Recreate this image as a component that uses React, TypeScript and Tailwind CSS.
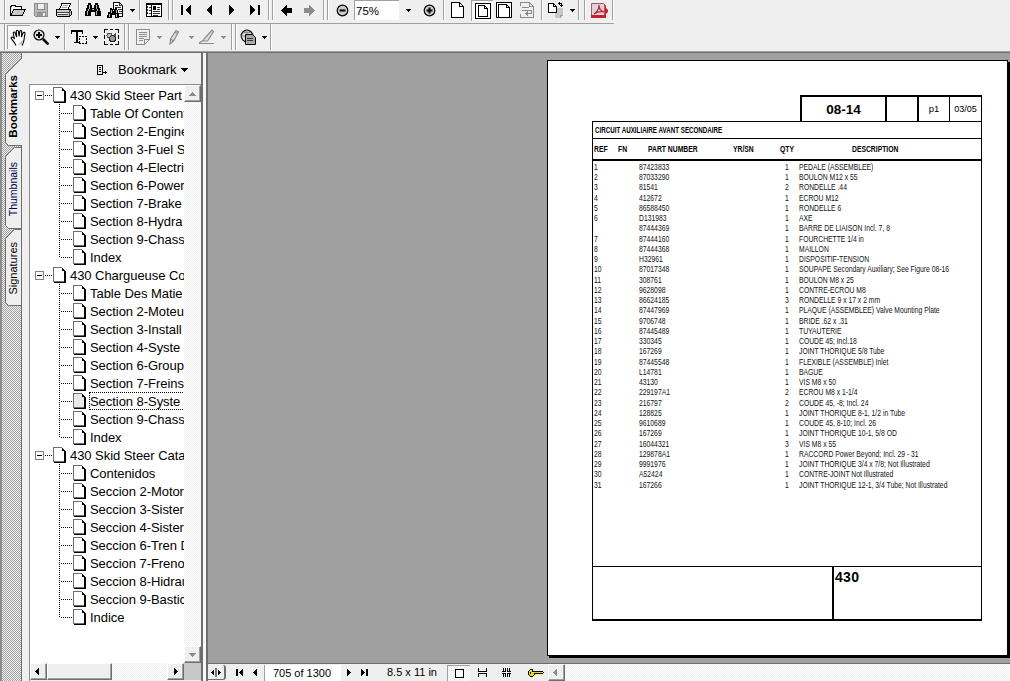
import React from 'react';
import clsx from 'clsx';

const bookmarks = [
  {
    title: '430 Skid Steer Part',
    items: [
      'Table Of Content',
      'Section 2-Engine',
      'Section 3-Fuel S',
      'Section 4-Electri',
      'Section 6-Power',
      'Section 7-Brake',
      'Section 8-Hydra',
      'Section 9-Chass',
      'Index',
    ],
  },
  {
    title: '430 Chargueuse Co',
    items: [
      'Table Des Matie',
      'Section 2-Moteu',
      'Section 3-Install',
      'Section 4-Syste',
      'Section 6-Group',
      'Section 7-Freins',
      'Section 8-Syste',
      'Section 9-Chass',
      'Index',
    ],
    selected: 6,
  },
  {
    title: '430 Skid Steer Cata',
    items: [
      'Contenidos',
      'Seccion 2-Motor',
      'Seccion 3-Sister',
      'Seccion 4-Sister',
      'Seccion 6-Tren D',
      'Seccion 7-Freno',
      'Seccion 8-Hidrau',
      'Seccion 9-Bastic',
      'Indice',
    ],
  },
];

// ref, part number, qty, description
const parts = [
  ['1', '87423833', '1', 'PEDALE (ASSEMBLEE)'],
  ['2', '87033290', '1', 'BOULON M12 x 55'],
  ['3', '81541', '2', 'RONDELLE .44'],
  ['4', '412672', '1', 'ECROU M12'],
  ['5', '86588450', '1', 'RONDELLE 6'],
  ['6', 'D131983', '1', 'AXE'],
  ['', '87444369', '1', 'BARRE DE LIAISON Incl. 7, 8'],
  ['7', '87444160', '1', 'FOURCHETTE 1/4 in'],
  ['8', '87444368', '1', 'MAILLON'],
  ['9', 'H32961', '1', 'DISPOSITIF-TENSION'],
  ['10', '87017348', '1', 'SOUPAPE Secondary Auxiliary; See Figure 08-16'],
  ['11', '308761', '1', 'BOULON M8 x 25'],
  ['12', '9628098', '1', 'CONTRE-ECROU M8'],
  ['13', '86624185', '3', 'RONDELLE 9 x 17 x 2 mm'],
  ['14', '87447969', '1', 'PLAQUE (ASSEMBLEE) Valve Mounting Plate'],
  ['15', '9706748', '1', 'BRIDE .62 x .31'],
  ['16', '87445489', '1', 'TUYAUTERIE'],
  ['17', '330345', '1', 'COUDE 45; Incl.18'],
  ['18', '167269', '1', 'JOINT THORIQUE 5/8 Tube'],
  ['19', '87445548', '1', 'FLEXIBLE (ASSEMBLE) Inlet'],
  ['20', 'L14781', '1', 'BAGUE'],
  ['21', '43130', '1', 'VIS M8 x 50'],
  ['22', '229197A1', '2', 'ECROU M8 x 1-1/4'],
  ['23', '216797', '2', 'COUDE 45, -8; Incl. 24'],
  ['24', '128825', '1', 'JOINT THORIQUE 8-1, 1/2 in Tube'],
  ['25', '9610689', '1', 'COUDE 45, 8-10; Incl. 26'],
  ['26', '167269', '1', 'JOINT THORIQUE 10-1, 5/8 OD'],
  ['27', '16044321', '3', 'VIS M8 x 55'],
  ['28', '129878A1', '1', 'RACCORD Power Beyond; Incl. 29 - 31'],
  ['29', '9991976', '1', 'JOINT THORIQUE 3/4 x 7/8; Not Illustrated'],
  ['30', 'A52424', '1', 'CONTRE-JOINT Not Illustrated'],
  ['31', '167266', '1', 'JOINT THORIQUE 12-1, 3/4 Tube; Not Illustrated'],
];

type IconProps = {
  w: number;
  h?: number;
  className?: string;
  smooth?: boolean;
  children: React.ReactNode;
};

const Icon = ({ w, h = 16, className, smooth, children }: IconProps) => (
  <svg
    width={w}
    height={h}
    viewBox={`0 0 ${w} ${h}`}
    fill="none"
    stroke="#000"
    shapeRendering={smooth ? 'auto' : 'crispEdges'}
    className={clsx('shrink-0', className)}
  >
    {children}
  </svg>
);

const Tri = ({ d, w, h, className, gray }: { d: string; w: number; h: number; className?: string; gray?: boolean }) => (
  <Icon w={w} h={h} className={className}>
    <path d={d} fill={gray ? '#8c8c8c' : '#000'} stroke="none" />
  </Icon>
);

const Drop = ({ className, gray }: { className?: string; gray?: boolean }) => (
  <Tri d="M0 0h5v1h-1v1h-1v1h-1v-1h-1v-1h-1z" w={5} h={3} className={className} gray={gray} />
);

const Sep = ({ className }: { className?: string }) => (
  <div className={clsx('w-[2px] shrink-0 self-stretch border-r border-white bg-[#a0a0a0]', className)} />
);

const FIRST = 'M0 0h2v10h-2zM9 0h1v10h-1v-1h-1v-1h-1v-1h-1v-1h-1v-2h1v-1h1v-1h1v-1h1z';
const LAST = 'M8 0h2v10h-2zM1 0h-1v10h1v-1h1v-1h1v-1h1v-1h1v-2h-1v-1h-1v-1h-1v-1h-1z';
const PREV = 'M6 0v10h-1v-1h-1v-1h-1v-1h-1v-1h-1v-2h1v-1h1v-1h1v-1h1v-1z';
const NEXT = 'M0 0v10h1v-1h1v-1h1v-1h1v-1h1v-2h-1v-1h-1v-1h-1v-1h-1v-1z';

const Page = ({ x = 0, y = 0, w = 13, h = 16 }) => (
  <path
    d={`M${x + 0.5} ${y + 0.5}h${w - 5}l4 4v${h - 5}h-${w - 1}zM${x + w - 4.5} ${y + 0.5}v4h4`}
    fill="#fff"
  />
);

const Binoculars = () => (
  <>
    <path
      d="M3 1h3v2h1v3h2v-3h1v-2h3v2h1v3h1v3h1v5h-6v-4h-4v4h-6v-5h1v-3h1v-3h1z"
      fill="#000"
      stroke="none"
    />
    <path d="M4.500 3v4M3.500 7v2M2.500 9v4M11.500 3v4M12.500 7v2M11.500 9v4M7 7.500h2" stroke="#b4b4b4" />
  </>
);

const TopBar = () => (
  <div className="flex h-[24px] w-[614px] items-center border-b border-[#a0a0a0] pb-[3px]">
    <Sep className="ml-[4px]" />
    {/* open */}
    <Icon w={17} className="ml-[3px]">
      <path d="M1.500 14v-10h1v-1h4v1h6v3" fill="#fff" />
      <path d="M1.500 13.500L5 7.500h11.500L13 13.500z" fill="#c8c8c8" />
    </Icon>
    {/* save */}
    <Icon w={15} className="ml-[8px]">
      <path d="M.5 1.500h13v13h-12l-1-1z" fill="#b8b8b8" stroke="#8c8c8c" />
      <path d="M3.500 1.500h7v6h-7z" fill="#eee" stroke="#8c8c8c" />
      <path d="M3.500 10.500h8v4h-8z" fill="#999" stroke="#8c8c8c" />
      <path d="M9 11h2v3h-2z" fill="#eee" stroke="none" />
    </Icon>
    {/* print */}
    <Icon w={16} className="ml-[7px]">
      <path d="M3.500 7.500L6 1.500h8.500L12 7.500z" fill="#fff" />
      <path d="M7 3.500h5M6 5.500h5" stroke="#999" />
      <path d="M1 7.500h13l1.500 2v3l-2 2h-12l-1-1v-4z" fill="#ccc" />
      <path d="M1 10.500h12M2 12.500h10M13.500 8v6" stroke="#444" />
      <path d="M2 11.500h9" stroke="#fff" />
    </Icon>
    <Sep className="ml-[6px]" />
    <Icon w={16} className="ml-[5px]">
      <Binoculars />
    </Icon>
    {/* search */}
    <Icon w={17} className="ml-[6px]">
      <path d="M6.500 8v-7.500h6l3 3v11h-4" fill="#fff" />
      <path d="M12.500 .5v3h3M8 3.500h3M8 5.500h6M11 7.500h4M12 9.500h3M12 11.500h3" stroke="#333" />
      <path d="M3 6h2v1h1v2h1v-2h1v-1h2v2h1v3h1v5h-4v-3h-3v3h-5v-3h1v-3h2z" fill="#000" stroke="none" />
      <path d="M4.500 8v3M2.500 12v3M9.500 8v3M9.500 12v3" stroke="#b4b4b4" />
    </Icon>
    <Drop className="ml-[6px]" />
    <Sep className="ml-[4px]" />
    {/* navigation pane */}
    <Icon w={16} className="ml-[5px]">
      <path d="M.5 1.500h15v13h-15z" fill="#fff" />
      <path d="M0 2.500h16M5.500 3v12" />
      <path d="M1.500 4v2M1.500 7v2M1.500 10v2M3 5.500h2M3 8.500h2M3 11.500h2M11 5.500h3M11 7.500h3M7 9.500h7M7 11.500h7M7 13.500h5" stroke="#333" />
      <path d="M7 4h3v4h-3z" fill="#000" stroke="none" />
    </Icon>
    <Sep className="ml-[6px]" />
    <Sep className="ml-[2px]" />
    <Tri d={FIRST} w={10} h={10} className="ml-[7px]" />
    <Tri d={PREV} w={6} h={10} className="ml-[15px]" />
    <Tri d={NEXT} w={6} h={10} className="ml-[17px]" />
    <Tri d={LAST} w={10} h={10} className="ml-[15px]" />
    <Sep className="ml-[8px]" />
    <Sep className="ml-[2px]" />
    <Tri d="M0 5h1v-1h1v-1h1v-1h1v-1h1v-1h1v3h5v5h-5v3h-1v-1h-1v-1h-1v-1h-1v-1h-1v-1h-1z" w={11} h={11} className="ml-[7px]" />
    <Tri gray d="M11 5h-1v-1h-1v-1h-1v-1h-1v-1h-1v-1h-1v3h-5v5h5v3h1v-1h1v-1h1v-1h1v-1h1v-1h1z" w={11} h={11} className="ml-[12px]" />
    <Sep className="ml-[8px]" />
    <Sep className="ml-[2px]" />
    <Icon w={13} h={13} smooth className="ml-[7px]">
      <circle cx="6.500" cy="6.500" r="5.300" fill="#ccc" strokeWidth="1.200" />
      <path d="M3.500 6.500h6" strokeWidth="2" />
    </Icon>
    <div className="ml-[5px] h-[20px] w-[45px] shrink-0 border-t border-l border-[#a0a0a0] bg-white pl-[1px] text-[11.500px] leading-[20px]">
      75%
    </div>
    <Drop className="ml-[7px]" />
    <Icon w={13} h={13} smooth className="ml-[12px]">
      <circle cx="6.500" cy="6.500" r="5.300" fill="#ccc" strokeWidth="1.200" />
      <path d="M3.500 6.500h6M6.500 3.500v6" strokeWidth="2" />
    </Icon>
    <Sep className="ml-[7px]" />
    <Icon w={13} className="ml-[6px]">
      <Page />
    </Icon>
    <div className="ml-[7px] flex h-[21px] w-[22px] shrink-0 items-center justify-center border-t border-l border-[#a0a0a0] bg-[#f8f8f8]">
      <Icon w={16}>
        <path d="M.5 .5h15v15h-15z" fill="#fff" />
        <path d="M3.500 2.500h6l3 3v8h-9zM9.500 2.500v3h3" />
      </Icon>
    </div>
    <Icon w={16} className="ml-[3px]">
      <path d="M.5 .5h15v15h-15z" fill="#fff" />
      <path d="M2.500 15.500v-13h8l3 3v10M10.500 2.500v3h3" />
    </Icon>
    <Icon w={14} className="ml-[8px]">
      <path d="M.5 4v-3.500h9l4 4v11h-13v-4M9.500 .5v4h3" stroke="#8c8c8c" />
      <path d="M2 5.500h7M2 8.500h9.500v3h-7M7.500 9v5M6.500 10v3M5.500 11v1" stroke="#8c8c8c" />
    </Icon>
    <Sep className="ml-[7px]" />
    {/* rotate view */}
    <Icon w={16} className="ml-[5px]">
      <path d="M7 6h8v7l-3 3h-5z" fill="#c8c8c8" stroke="none" />
      <path d="M12 16v-3h3" stroke="#a0a0a0" />
      <path d="M.5 1.500h5l3 3v6h-8zM5.500 1.500v3h3" fill="#fff" />
      <path d="M10 1.500h3M13.500 1v4M12 3.500h3M11.500 0v3" />
    </Icon>
    <Drop className="ml-[6px]" />
    <Sep className="ml-[3px]" />
    <Sep className="ml-[4px]" />
    {/* acrobat */}
    <Icon w={17} smooth className="ml-[5px]">
      <path d="M.5 1.500h12l2 2v12h-14z" fill="#dcd4d8" stroke="#8c6070" />
      <path d="M0 13h15v3h-15z" fill="#c81e32" stroke="none" />
      <path d="M14 3v11M15 7l2 2-2 2z" stroke="#c81e32" strokeWidth="1.500" />
      <path d="M3 12c3-2 5-6 5-9 0 3 1 6 5 7-4-1-7 0-10 2z" stroke="#c81e32" strokeWidth="1.200" />
    </Icon>
    <Sep className="ml-[4px]" />
  </div>
);

const ToolBar = () => (
  <div className="flex h-[27px] items-center pb-px">
    <Sep className="ml-[4px]" />
    <div className="ml-[1px] flex h-[24px] w-[23px] shrink-0 items-center justify-center border-t border-l border-[#a0a0a0] bg-[#f8f8f8]">
      {/* hand */}
      <Icon w={18} h={18} smooth>
        <path
          d="M6 16.500c-1-3-4-5-4.800-7.500 0-1.500 1.800-1.300 3.300 1L3.300 4.500C3 2.800 4.700 2.500 5.200 4l1.500 4L6.300 2.500c0-1.600 1.900-1.600 2.200 0L9 7.500l.8-5c.3-1.500 2-1.300 1.900.3L11.400 8l1.700-4c.7-1.300 2.200-.7 1.900.7-.5 2.300-.8 3.800-1 6.300-.2 2.300-1 3.500-2 5.500"
          fill="#fff"
          strokeWidth="1.100"
        />
        <path d="M8 16l5-5-.5 4z" fill="#bbb" stroke="none" />
      </Icon>
    </div>
    {/* zoom in */}
    <Icon w={16} smooth className="ml-[3px]">
      <circle cx="6" cy="6" r="5" fill="#ddd" strokeWidth="1.200" />
      <path d="M3 6h6M6 3v6" strokeWidth="2" />
      <path d="M10 10l5.500 5.500" strokeWidth="2.600" />
    </Icon>
    <Drop className="ml-[6px]" />
    <Sep className="ml-[4px]" />
    {/* text select */}
    <Icon w={17} className="ml-[5px]">
      <path d="M0 1h12v4h-1v-2h-4v10h2v1h-6v-1h2v-10h-4v2h-1z" fill="#000" stroke="none" />
      <path d="M8 7.500h2M11 7.500h2M14 7.500h2M8 14.500h2M11 14.500h2M14 14.500h2M8.500 9v2M8.500 12v2M15.500 9v2M15.500 12v2" />
    </Icon>
    <Drop className="ml-[5px]" />
    {/* graphics select */}
    <Icon w={15} className="ml-[6px]">
      <path d="M.5 4v-3.500h3.500M6 .5h3M11 .5h3.500v3.500M14.500 6v4M14.500 12v3.500h-3.500M9 15.500h-3M4 15.500h-3.500v-3.500M.5 10v-4" />
      <circle cx="5.500" cy="6.500" r="2.500" fill="#bbb" stroke="#555" />
      <path d="M6 7.500h3l2-2v4" fill="#555" stroke="#555" />
      <circle cx="8.500" cy="9.500" r="3" fill="#999" stroke="#222" />
    </Icon>
    <Sep className="ml-[5px]" />
    <Sep className="ml-[2px]" />
    {/* note */}
    <Icon w={14} className="ml-[6px]">
      <path d="M.5 .5h13v10l-5 5h-8zM8.500 15v-4.500h5M3 3.500h8M3 5.500h8M3 7.500h8M3 9.500h5M3 11.500h4" stroke="#8c8c8c" />
    </Icon>
    <Drop gray className="ml-[7px]" />
    {/* pencil */}
    <Icon w={11} smooth className="ml-[7px]">
      <path d="M1 15l.5-5L7 1.500l2.500 1.500-5 9z M1.500 10l3 2M6 3l3 2" fill="#ddd" stroke="#8c8c8c" strokeWidth="1.200" />
    </Icon>
    <Drop gray className="ml-[9px]" />
    {/* highlighter */}
    <Icon w={16} smooth className="ml-[5px]">
      <path d="M5 10l8-9 1.500 1.500-6 9.500H4zM0 14.500h15M0 14l4-2.500" fill="#ddd" stroke="#8c8c8c" strokeWidth="1.200" />
    </Icon>
    <Drop gray className="ml-[6px]" />
    <Sep className="ml-[5px]" />
    <Sep className="ml-[2px]" />
    {/* web capture */}
    <Icon w={17} smooth className="ml-[3px]">
      <circle cx="7" cy="7" r="5.800" fill="#ddd" strokeWidth="1.200" />
      <path d="M1 7h12M7 1v12M3 3.500h8" stroke="#888" />
      <path d="M5.500 5.500h7l3 3v7h-10z" fill="#aaa" />
      <path d="M7 9.500h6M7 11.500h6" stroke="#333" />
    </Icon>
    <Drop className="ml-[5px]" />
    <Sep className="ml-[3px]" />
  </div>
);

const ScrollButton = ({ className = 'w-[17px]', children }: { className?: string; children: React.ReactNode }) => (
  <div
    className={clsx(
      'flex h-[17px] shrink-0 items-center justify-center border border-t-white border-r-[#6e6e6e] border-b-[#6e6e6e] border-l-white bg-[#efefef] shadow-[inset_-1px_-1px_0_#a0a0a0]',
      className,
    )}
  >
    {children}
  </div>
);

const TreePage = ({ selected }: { selected?: boolean }) => (
  <Icon w={13} className="my-px">
    <path d="M.5 .5h8l3 3v11h-11z" fill={selected ? '#e8e8e8' : '#fff'} stroke="#6e6e6e" />
    <path d="M9 1.500h1M9 2.500h2M9 3.500h3M11.500 3v13M12.500 4v12M1 15.500h12" />
  </Icon>
);

const Tree = () => (
  <div className="h-[578px] w-[154px] shrink-0 overflow-hidden bg-white pt-px text-[13px] whitespace-nowrap">
    {bookmarks.map((group, idx) => (
      <div key={idx}>
        <div className="flex h-[18px] items-center">
          <Icon w={9} h={9} className="ml-[5px]">
            <path d="M.5 .5h8v8h-8z" stroke="#808080" />
            <path d="M2 4.500h5" />
          </Icon>
          <div className="ml-px h-px w-[8px] shrink-0 bg-[repeating-linear-gradient(90deg,#000_0_1px,transparent_1px_2px)]" />
          <TreePage />
          <span className="ml-[4px] pt-px leading-[18px] tracking-[-0.050px]">{group.title}</span>
        </div>
        {group.items.map((item, i) => (
          <div key={i} className="flex h-[18px] items-center">
            <div
              className={clsx(
                'ml-[29px] w-px shrink-0 self-start bg-[repeating-linear-gradient(180deg,#000_0_1px,transparent_1px_2px)]',
                i === group.items.length - 1 ? 'h-[9px]' : 'h-[18px]',
              )}
            />
            <div className="ml-px h-px w-[12px] shrink-0 bg-[repeating-linear-gradient(90deg,#000_0_1px,transparent_1px_2px)]" />
            <TreePage selected={group.selected === i} />
            <span
              className={clsx(
                'ml-[3px] w-[120px] shrink-0 tracking-[-0.050px]',
                group.selected === i
                  ? 'h-[18px] border border-dotted border-black leading-[18px]'
                  : 'pt-px pl-px leading-[18px]',
              )}
            >
              {item}
            </span>
          </div>
        ))}
      </div>
    ))}
  </div>
);

const SideTabs = () => (
  <div className="relative w-[22px] shrink-0 border-l-2 border-[#8c8c8c] bg-[repeating-conic-gradient(#a0a0a0_0_25%,#f4f4f4_0_50%)] bg-[length:2px_2px]">
    <svg width="20" height="628" viewBox="2 53 20 628" className="absolute top-0 left-0" fill="#efefef" stroke="#6e6e6e">
      <path d="M21.500 229.500h-7l-9 9v64l3 3h13" />
      <path d="M21.500 147.500h-7l-9 9v69l3 3h13" />
      <path d="M21.500 305v377" />
      <path d="M22.500 57.500l-17 17v68l3 3h14" />
      <path d="M21.500 145v160" />
      <path d="M21.500 53v5" />
    </svg>
    <span className="absolute top-[22px] left-[3px] rotate-180 text-[11.500px] leading-[16px] font-bold [writing-mode:vertical-rl]">
      Bookmarks
    </span>
    <span className="absolute top-[109px] left-[3px] rotate-180 text-[10.500px] leading-[16px] text-[#000050] [writing-mode:vertical-rl]">
      Thumbnails
    </span>
    <span className="absolute top-[189px] left-[3px] rotate-180 text-[11px] leading-[16px] [writing-mode:vertical-rl]">
      Signatures
    </span>
  </div>
);

const TRACK = 'bg-[repeating-conic-gradient(#efefef_0_25%,#fff_0_50%)] bg-[length:2px_2px]';

const Sidebar = () => (
  <div className="flex w-[208px] shrink-0">
    <SideTabs />
    <div className="flex w-[181px] shrink-0 flex-col border-r-2 border-[#6e6e6e] pl-[7px]">
      <div className="flex h-[31px] items-center pt-[2px]">
        <Icon w={11} h={10} className="ml-[68px]">
          <path d="M.5 .5h5v9h-5zM2 2.500h2M2 4.500h2M2 6.500h2M6 7.500h4M8.500 6v3" />
        </Icon>
        <span className="ml-[10px] text-[13px] leading-[18px]">Bookmark</span>
        <Tri d="M0 0h7v1h-1v1h-1v1h-1v1h-1v-1h-1v-1h-1v-1h-1z" w={7} h={4} className="ml-[4px]" />
      </div>
      <div className="flex flex-1 flex-col border-t border-l border-[#8c8c8c]">
        <div className="flex h-[578px]">
          <Tree />
          <div className={clsx('flex w-[17px] flex-col justify-between', TRACK)}>
            <ScrollButton>
              <Tri gray d="M3 0h1v1h1v1h1v1h1v1h-7v-1h1v-1h1v-1h1z" w={7} h={4} />
            </ScrollButton>
            <ScrollButton>
              <Tri gray d="M0 0h7v1h-1v1h-1v1h-1v1h-1v-1h-1v-1h-1v-1h-1z" w={7} h={4} />
            </ScrollButton>
          </div>
        </div>
        <div className="flex h-[17px]">
          <div className={clsx('flex w-[154px] justify-between', TRACK)}>
            <ScrollButton className="w-[17px] pr-[3px]">
              <Tri d="M4 0v7h-1v-1h-1v-1h-1v-1h-1v-1h1v-1h1v-1h1v-1z" w={4} h={7} />
            </ScrollButton>
            <ScrollButton className="mr-auto w-[65px]">{null}</ScrollButton>
            <ScrollButton>
              <Tri d="M0 0v7h1v-1h1v-1h1v-1h1v-1h-1v-1h-1v-1h-1v-1z" w={4} h={7} />
            </ScrollButton>
          </div>
          <div className="flex-1 bg-[#c8c8c8]" />
        </div>
      </div>
    </div>
    <div className="w-[3px] bg-[#f8f8f8]" />
    <div className="w-[2px] bg-[#6e6e6e]" />
  </div>
);

// headings and cells are set in a condensed face
const Narrow = ({ children }: { children: React.ReactNode }) => (
  <span className="inline-block origin-left scale-x-[.79]">{children}</span>
);

const Sheet = () => (
  <div className="mt-[6px] ml-[339px] h-[596px] w-[461px] shrink-0 border border-black bg-white pt-[34px] pl-[44px] text-black shadow-[2px_2px_0_#000]">
    <div className="ml-[208px] flex h-[26px] w-[182px] border-t-2 border-r border-l-2 border-black text-center">
      <div className="w-[83px] text-[13.500px] leading-[25px] font-bold">08-14</div>
      <div className="w-[34px] border-r-2 border-l-2 border-black" />
      <div className="w-[30px] text-[9.500px] leading-[24px]">p1</div>
      <div className="flex-1 border-l border-black text-[9px] leading-[24px] tracking-[-0.050px]">03/05</div>
    </div>
    <div className="flex h-[500px] w-[390px] flex-col border border-b-2 border-black">
      <div className="h-[17px] border-b border-black pl-[2px] text-[8.200px] leading-[17px] font-bold whitespace-nowrap">
        <span className="inline-block origin-left scale-x-[.76]">CIRCUIT AUXILIAIRE AVANT SECONDAIRE</span>
      </div>
      <div className="flex h-[22px] shrink-0 border-b-2 border-black text-[8.600px] leading-[21px] font-bold whitespace-nowrap">
        <span className="w-[25px] pl-px"><Narrow>REF</Narrow></span>
        <span className="w-[30px]"><Narrow>FN</Narrow></span>
        <span className="w-[85px]"><Narrow>PART NUMBER</Narrow></span>
        <span className="w-[47px]"><Narrow>YR/SN</Narrow></span>
        <span className="w-[72px]"><Narrow>QTY</Narrow></span>
        <span><Narrow>DESCRIPTION</Narrow></span>
      </div>
      <div className="flex-1 pt-[.800px] text-[8.600px] whitespace-nowrap text-[#111]">
        {parts.map(([ref, num, qty, desc], idx) => (
          <div key={idx} className="flex h-[10.260px] leading-[10.260px]">
            <span className="w-[46px] shrink-0 pl-px"><Narrow>{ref}</Narrow></span>
            <span className="w-[144px] shrink-0"><Narrow>{num}</Narrow></span>
            <span className="w-[15.500px] shrink-0 pl-[2px]"><Narrow>{qty}</Narrow></span>
            <span className="shrink-0"><Narrow>{desc}</Narrow></span>
          </div>
        ))}
      </div>
      <div className="flex h-[53px] shrink-0 border-t border-black">
        <div className="w-[239px]" />
        <div className="flex-1 border-l-2 border-black pl-px text-[14px] leading-[20px] font-bold tracking-[0.300px]">
          430
        </div>
      </div>
    </div>
  </div>
);

const StatusBar = () => (
  <div className="flex h-[18px] items-center border-t border-[#6e6e6e] bg-[#efefef] text-[11px] whitespace-nowrap">
    <div className="flex h-[15px] w-[18px] shrink-0 items-center justify-center rounded-r-[3px] border-r-2 border-b border-[#6e6e6e]">
      <Icon w={10} h={9}>
        <path d="M4.500 0v9M5.500 0v9" stroke="#777" />
        <path d="M3 2v5l-3-2.500zM7 2v5l3-2.500z" fill="#000" stroke="none" />
      </Icon>
    </div>
    <Tri d="M0 0h2v7h-2zM7 0v7h-1v-1h-1v-1h-1v-1h-1v-1h1v-1h1v-1h1v-1z" w={7} h={7} className="ml-[10px]" />
    <Tri d="M4 0v7h-1v-1h-1v-1h-1v-1h-1v-1h1v-1h1v-1h1v-1z" w={4} h={7} className="ml-[10px]" />
    <div className="ml-[7px] h-[16px] w-[77px] shrink-0 border-l border-[#a0a0a0] bg-white pr-[2px] text-center leading-[16px]">
      705 of 1300
    </div>
    <Tri d="M0 0v7h1v-1h1v-1h1v-1h1v-1h-1v-1h-1v-1h-1v-1z" w={4} h={7} className="ml-[6px]" />
    <Tri d="M5 0h2v7h-2zM0 0v7h1v-1h1v-1h1v-1h1v-1h-1v-1h-1v-1h-1v-1z" w={7} h={7} className="ml-[10px]" />
    <span className="ml-[19px] w-[60px] shrink-0 leading-[17px]">8.5 x 11 in</span>
    <div className={clsx('flex h-[16px] w-[23px] shrink-0 items-center justify-center border-t border-l border-[#a0a0a0]', TRACK)}>
      <Icon w={9} h={9}>
        <path d="M.5 .5h8v8h-8z" fill="#fff" />
      </Icon>
    </div>
    <Icon w={9} h={9} className="ml-[8px]">
      <path d="M.5 0v3.500h8v-3.500M.5 9v-3.500h8v3.500" />
    </Icon>
    {/* facing pages */}
    <Icon w={9} h={9} className="ml-[15px]">
      <path d="M0 3.500h4M5 3.500h4M0 5.500h4M5 5.500h4M1.500 0v3M3.500 0v3M5.500 0v3M7.500 0v3M1.500 6v3M3.500 6v3M5.500 6v3M7.500 6v3" />
    </Icon>
    <Icon w={16} h={8} className="ml-[17px]">
      <path d="M5 2.500h9.500l1 1-1 1h-8v1l-2 2h-2l-2-2v-3l2-2h2z" fill="#f0e000" />
      <path d="M2.500 3v2" />
    </Icon>
    <div className={clsx('ml-[4px] flex flex-1', TRACK)}>
      <ScrollButton className="w-[17px] pr-[3px]">
        <Tri gray d="M4 0v7h-1v-1h-1v-1h-1v-1h-1v-1h1v-1h1v-1h1v-1z" w={4} h={7} />
      </ScrollButton>
    </div>
  </div>
);

const App = () => {
  return (
    <div className="flex h-[681px] w-[1010px] flex-col overflow-hidden bg-[#efefef] font-['Liberation_Sans',Arial,sans-serif] text-black">
      <TopBar />
      <ToolBar />
      <div className="h-[2px] shrink-0 border-t border-[#a0a0a0] bg-[#6e6e6e]" />
      <div className="flex h-[628px] shrink-0">
        <Sidebar />
        <div className="flex w-[802px] flex-col">
          <div className="flex h-[610px] overflow-hidden bg-[#a0a0a0] pt-px">
            <Sheet />
          </div>
          <StatusBar />
        </div>
      </div>
    </div>
  );
};

export default App;
